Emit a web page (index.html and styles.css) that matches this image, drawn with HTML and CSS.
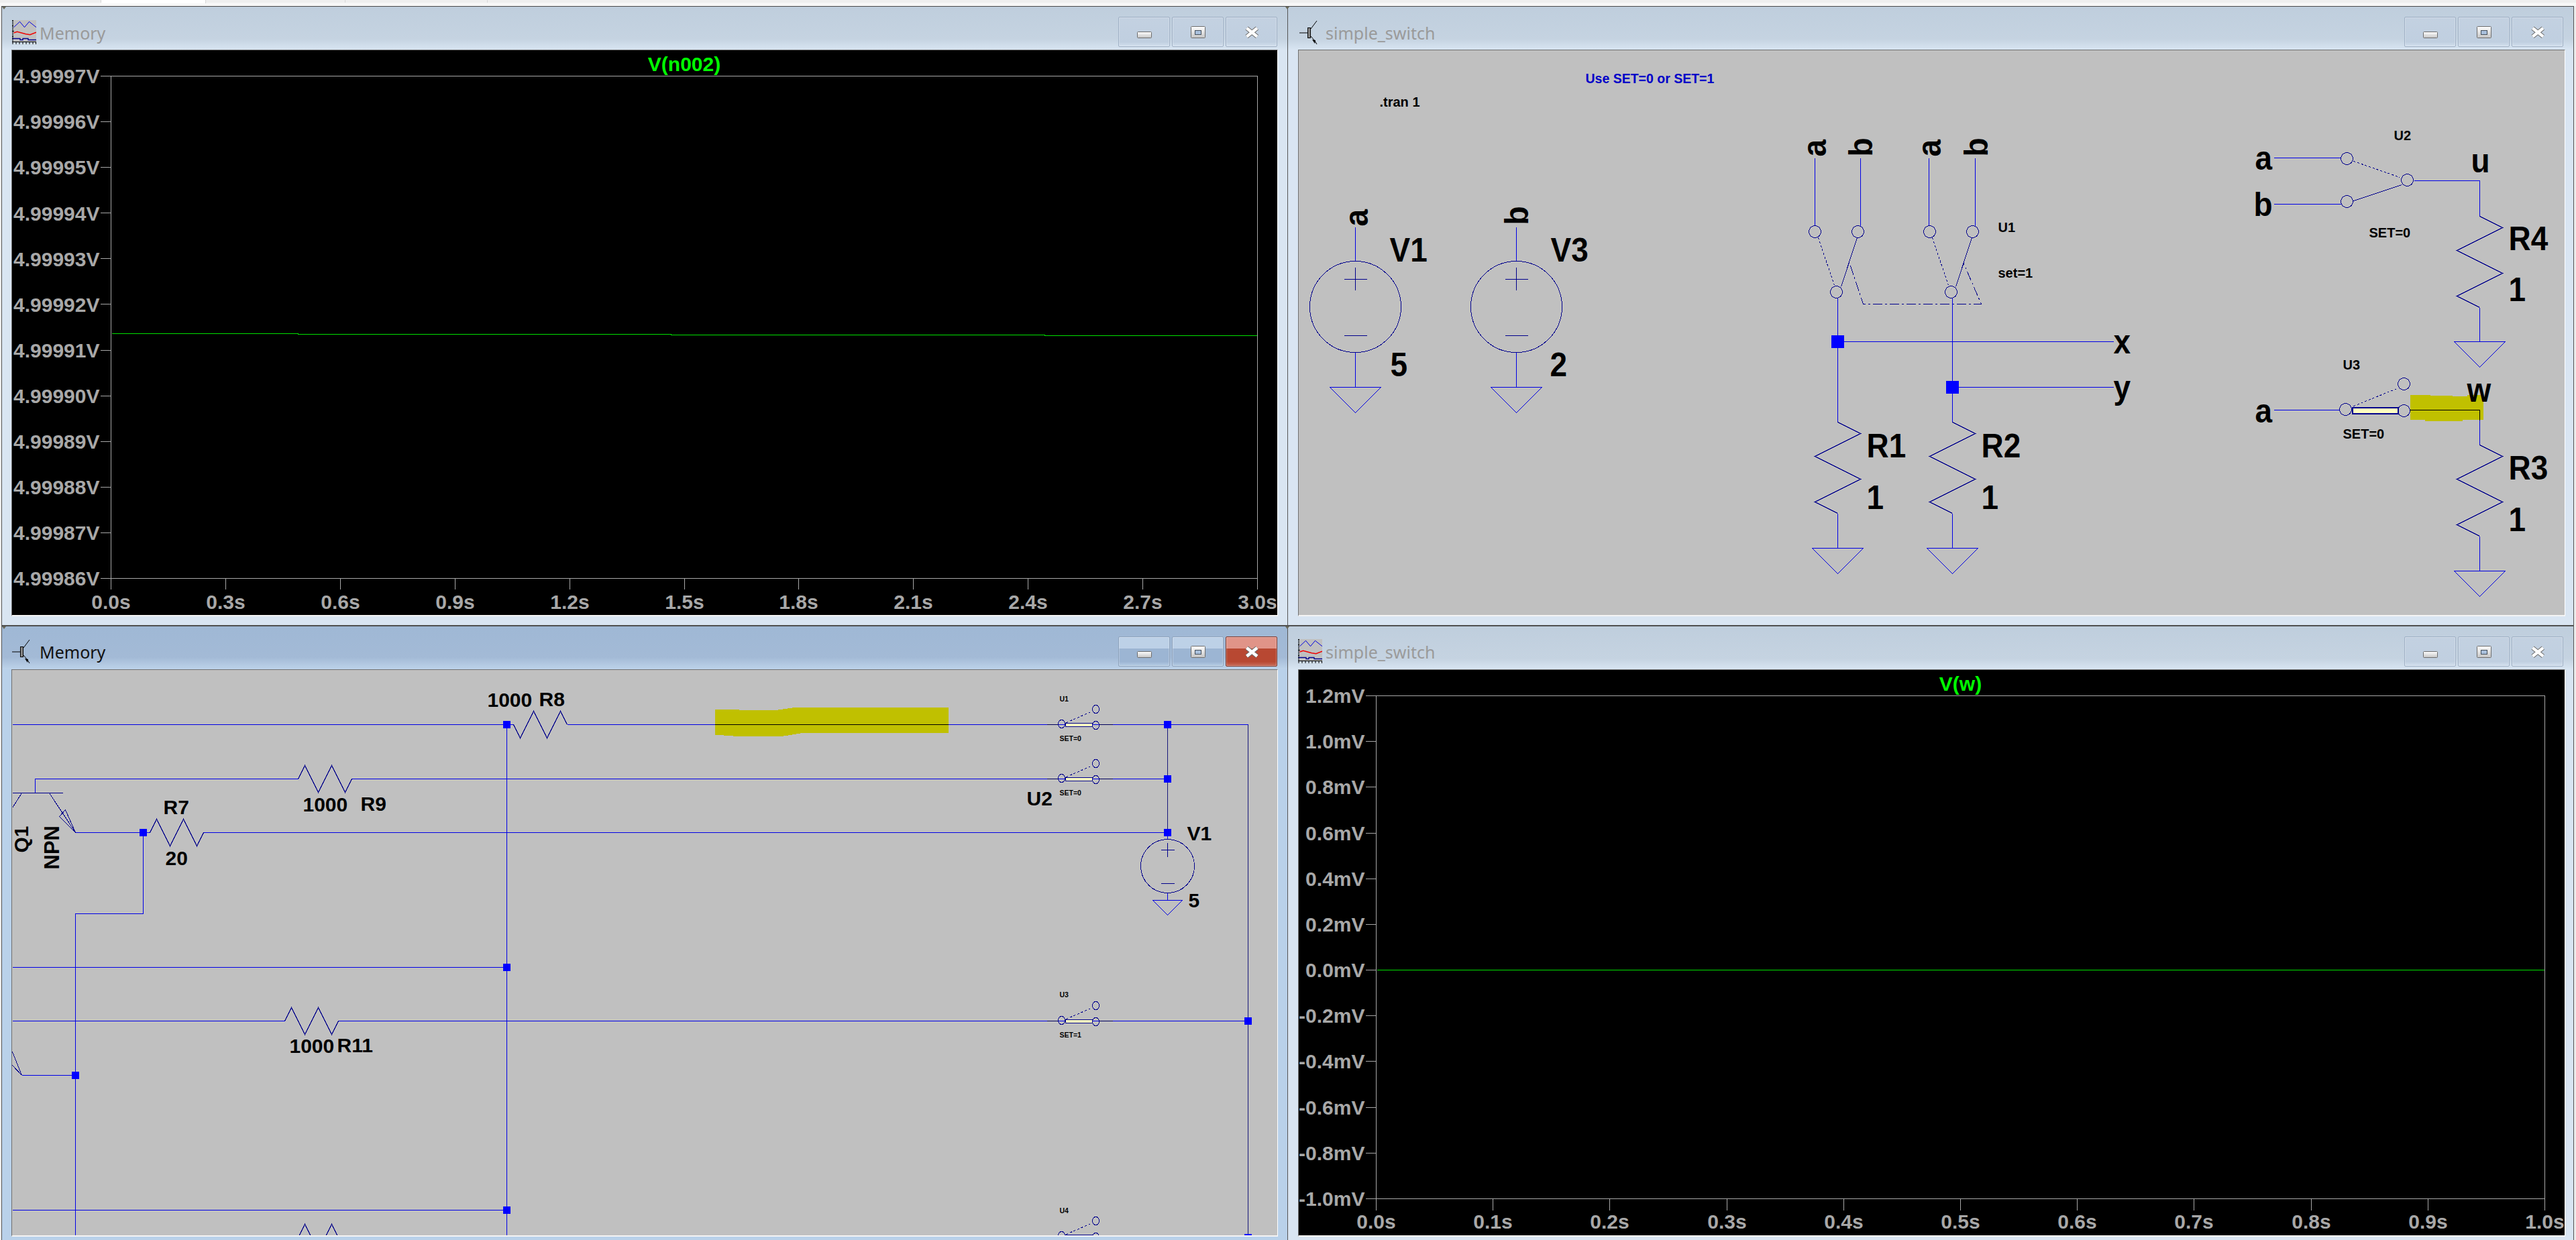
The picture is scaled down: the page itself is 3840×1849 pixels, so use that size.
FILE: index.html
```html
<!DOCTYPE html>
<html lang="en">
<head>
<meta charset="utf-8">
<title>LTspice</title>
<link rel="stylesheet" href="styles.css">
</head>
<body>
<svg class="sprite" aria-hidden="true">
  <defs>
    <g id="i-wave">
      <rect x="2" y="0" width="34" height="32" fill="#c0c0c0"/>
      <path d="M2.5 10.7L11.5 2.3L18.5 10.7L25.5 2.3L36 10.7" fill="none" stroke="#0000e0" stroke-width="1"/>
      <path d="M2.5 19L7.6 17.3L20.4 20.7L26.8 21.7L36 18.3" fill="none" stroke="#f00000" stroke-width="1.5"/>
      <path d="M0 27.5H12V29.5H16V27.5H24V29.5H36" fill="none" stroke="#00008c" stroke-width="1.3"/>
      <path d="M1 0V32M0 0.5H2M0 8.5H2M0 16.5H3M0 24.5H2M0 32.5H36M1 33V36M6 33V36M11 33V36M16 33V36M21 33V36M26 33V36M31 33V36M35.5 33V36" fill="none" stroke="#000" stroke-width="1"/>
    </g>
    <g id="i-bjt">
      <path d="M0 19H12M17 13L26 1M17 24L23 31L26 36" fill="none" stroke="#000" stroke-width="1"/>
      <rect x="12.5" y="11.5" width="4" height="15" fill="#888" stroke="#000"/>
      <path d="M19 29L24 30L23 35Z" fill="#000"/>
    </g>
    <g id="g-min"><rect x="0.5" y="0.5" width="21" height="9" rx="1" fill="url(#glyph)" stroke="#6d6d6d"/></g>
    <g id="g-max">
      <rect x="0.5" y="0.5" width="21" height="17" rx="1" fill="url(#glyph)" stroke="#6d6d6d"/>
      <rect x="6.5" y="6.5" width="9" height="6" fill="#a9c0dc" stroke="#45505c"/>
    </g>
    <g id="g-close">
      <path d="M3.5 3L19 15.5M19 3L3.5 15.5" fill="none" stroke="#6d6d6d" stroke-width="6.5"/>
      <path d="M3.5 3L19 15.5M19 3L3.5 15.5" fill="none" stroke="#fff" stroke-width="4.5"/>
    </g>
    <linearGradient id="glyph" x1="0" y1="0" x2="0" y2="1">
      <stop offset="0" stop-color="#fff"/>
      <stop offset="1" stop-color="#c4c4c4"/>
    </linearGradient>
    <path id="res-v" d="M0 0L34 17L-34 51L34 85L-34 119L0 136" fill="none" stroke="#00008c"/>
    <path id="res-h" d="M0 0L10 -20L30 20L50 -20L70 20L80 0" fill="none" stroke="#00008c"/>
    <path id="res-h2" d="M0 0L10 20L30 -20L50 20L70 -20L80 0" fill="none" stroke="#00008c"/>
    <path id="gnd" d="M-38 0H38L0 38Z" fill="none" stroke="#0000e0"/>
    <path id="gnd-s" d="M-22 0H22L0 22Z" fill="none" stroke="#0000e0"/>
    <rect id="dot" x="-9.5" y="-9.5" width="19" height="19" fill="#0000ff"/>
    <rect id="dot-s" x="-5.5" y="-5.5" width="11" height="11" fill="#0000ff"/>
    <g id="sw">
      <path d="M-22 0H-5M56 0H76" fill="none" stroke="#00005c"/>
      <ellipse cx="0" cy="-1" rx="5" ry="6" fill="none" stroke="#00008c"/>
      <ellipse cx="51" cy="1" rx="5" ry="6" fill="none" stroke="#00008c"/>
      <ellipse cx="51" cy="-23" rx="5" ry="6" fill="none" stroke="#00008c"/>
      <rect x="6" y="-2" width="40" height="5" fill="#ffffc0" stroke="#00008c"/>
      <path d="M7 -3L46 -20" fill="none" stroke="#00008c" stroke-dasharray="3 3"/>
    </g>
  </defs>
</svg>

<div class="tabstrip">
  <div class="tab tab-a"></div>
  <div class="tab tab-b is-on"></div>
  <div class="tab tab-c"></div>
  <div class="tab tab-d"></div>
  <div class="tab tab-e"></div>
</div>

<main class="desk">

  <section class="win win-l win-top">
    <header class="bar">
      <svg class="ico" width="36" height="36" viewBox="0 0 36 36"><use href="#i-wave"/></svg>
      <span class="title">Memory</span>
      <div class="btns">
        <div class="btn"><svg class="gl-min" width="22" height="10"><use href="#g-min"/></svg></div>
        <div class="btn"><svg class="gl-max" width="22" height="18"><use href="#g-max"/></svg></div>
        <div class="btn"><svg class="gl-x" width="22" height="18"><use href="#g-close"/></svg></div>
      </div>
    </header>
    <div class="client">
      <svg class="draw plot" width="1886" height="842" viewBox="17.5 74.5 1886 842">
        <text class="ptitle" x="1019.5" y="105">V(n002)</text>
        <path class="axis" d="M149 113H1874V878M165 113V878M165 862H1874
          M149 181H165M149 249H165M149 317H165M149 385H165M149 453H165M149 522H165M149 590H165M149 658H165M149 726H165M149 794H165M149 862H165
          M336 862V878M507 862V878M678 862V878M849 862V878M1020 862V878M1190 862V878M1361 862V878M1532 862V878M1703 862V878"/>
        <path class="trace" d="M166 497H444V498H1000V499H1557V500H1873"/>
        <g class="ylab">
          <text x="148" y="123">4.99997V</text>
          <text x="148" y="191">4.99996V</text>
          <text x="148" y="259">4.99995V</text>
          <text x="148" y="328">4.99994V</text>
          <text x="148" y="396">4.99993V</text>
          <text x="148" y="464">4.99992V</text>
          <text x="148" y="532">4.99991V</text>
          <text x="148" y="600">4.99990V</text>
          <text x="148" y="668">4.99989V</text>
          <text x="148" y="736">4.99988V</text>
          <text x="148" y="804">4.99987V</text>
          <text x="148" y="872">4.99986V</text>
        </g>
        <g class="xlab">
          <text x="165" y="907">0.0s</text>
          <text x="336" y="907">0.3s</text>
          <text x="507" y="907">0.6s</text>
          <text x="678" y="907">0.9s</text>
          <text x="849" y="907">1.2s</text>
          <text x="1020" y="907">1.5s</text>
          <text x="1190" y="907">1.8s</text>
          <text x="1361" y="907">2.1s</text>
          <text x="1532" y="907">2.4s</text>
          <text x="1703" y="907">2.7s</text>
          <text x="1874" y="907">3.0s</text>
        </g>
      </svg>
    </div>
  </section>

  <section class="win win-r win-top">
    <header class="bar">
      <svg class="ico" width="36" height="36" viewBox="-2 0 36 36"><use href="#i-bjt"/></svg>
      <span class="title">simple_switch</span>
      <div class="btns">
        <div class="btn"><svg class="gl-min" width="22" height="10"><use href="#g-min"/></svg></div>
        <div class="btn"><svg class="gl-max" width="22" height="18"><use href="#g-max"/></svg></div>
        <div class="btn"><svg class="gl-x" width="22" height="18"><use href="#g-close"/></svg></div>
      </div>
    </header>
    <div class="client">
      <svg class="draw sheet" width="1887" height="842" viewBox="1935.5 74.5 1887 842">
        <polygon class="hl" points="3592,588 3622,588 3622,589 3655,589 3655,590 3677,590 3677,588 3701,588 3701,625 3670,625 3670,627 3614,627 3614,625 3592,625"/>

        <text class="note" x="2363" y="123">Use SET=0 or SET=1</text>
        <text class="sm" x="2056" y="158">.tran 1</text>

        <path class="wire" d="M2020 338V389M2020 525V577M2260 338V389M2260 525V577"/>
        <circle class="part" cx="2020" cy="457" r="68"/>
        <circle class="part" cx="2260" cy="457" r="68"/>
        <path class="part" d="M2020 398V432M2003 416H2037M2003 500H2037M2260 398V432M2243 416H2277M2243 500H2277"/>
        <use href="#gnd" x="2020" y="577"/>
        <use href="#gnd" x="2260" y="577"/>
        <text class="lg-r" transform="translate(2038 337) rotate(-90) scale(.92 1)">a</text>
        <text class="lg-r" transform="translate(2277 335) rotate(-90) scale(.92 1)">b</text>
        <text class="lg" x="2071" y="390">V1</text>
        <text class="lg" x="2311" y="390">V3</text>
        <text class="lg" x="2072" y="561">5</text>
        <text class="lg" x="2310" y="561">2</text>

        <text class="lg-r" transform="translate(2721 233) rotate(-90) scale(.92 1)">a</text>
        <text class="lg-r" transform="translate(2790 233) rotate(-90) scale(.92 1)">b</text>
        <text class="lg-r" transform="translate(2892 233) rotate(-90) scale(.92 1)">a</text>
        <text class="lg-r" transform="translate(2962 233) rotate(-90) scale(.92 1)">b</text>
        <path class="wire" d="M2705 235V336M2773 235V336M2875 235V336M2944 235V336"/>
        <circle class="part" cx="2705" cy="345" r="9"/>
        <circle class="part" cx="2769" cy="345" r="9"/>
        <circle class="part" cx="2876" cy="345" r="9"/>
        <circle class="part" cx="2940" cy="345" r="9"/>
        <circle class="part" cx="2737" cy="435" r="9"/>
        <circle class="part" cx="2908" cy="435" r="9"/>
        <path class="part dash" d="M2710 354L2734 425M2880 354L2904 425"/>
        <path class="part" d="M2768 354L2744 427M2939 354L2915 427"/>
        <path class="part dashdot" d="M2758 396L2777 453H2953L2927 393"/>
        <path class="wire" d="M2739 444V629M2910 444V629M2739 509H3150M2910 577H3150"/>
        <use href="#dot" x="2739" y="509"/>
        <use href="#dot" x="2910" y="577"/>
        <text class="sm" x="2978" y="345">U1</text>
        <text class="sm" x="2978" y="413">set=1</text>
        <text class="lg" x="3150" y="527">x</text>
        <text class="lg" x="3150" y="595">y</text>

        <use href="#res-v" x="2739" y="629"/>
        <use href="#res-v" x="2910" y="629"/>
        <path class="wire" d="M2739 765V817M2910 765V817"/>
        <use href="#gnd" x="2739" y="817"/>
        <use href="#gnd" x="2910" y="817"/>
        <text class="lg" x="2782" y="682">R1</text>
        <text class="lg" x="2953" y="682">R2</text>
        <text class="lg" x="2782" y="759">1</text>
        <text class="lg" x="2953" y="759">1</text>

        <text class="lg" x="3361" y="253">a</text>
        <text class="lg" x="3359" y="322">b</text>
        <text class="sm" x="3568" y="208">U2</text>
        <text class="sm" x="3531" y="353">SET=0</text>
        <path class="wire" d="M3389 235H3489M3389 304H3489M3598 269H3696V322"/>
        <circle class="part" cx="3498" cy="236" r="9"/>
        <circle class="part" cx="3498" cy="300" r="9"/>
        <circle class="part" cx="3588" cy="268" r="9"/>
        <path class="part dash" d="M3508 240L3577 264"/>
        <path class="part" d="M3508 299L3580 275"/>
        <text class="lg" x="3683" y="257">u</text>
        <use href="#res-v" x="3696" y="322"/>
        <path class="wire" d="M3696 458V509"/>
        <use href="#gnd" x="3696" y="509"/>
        <text class="lg" x="3739" y="373">R4</text>
        <text class="lg" x="3739" y="449">1</text>

        <text class="lg" x="3361" y="630">a</text>
        <text class="sm" x="3492" y="550">U3</text>
        <text class="sm" x="3492" y="653">SET=0</text>
        <path class="wire" d="M3389 611H3487M3696 626V663"/>
        <path class="ink" d="M3592 611H3696V626"/>
        <circle class="part" cx="3496" cy="610" r="9"/>
        <circle class="part" cx="3583" cy="612" r="9"/>
        <circle class="part" cx="3583" cy="572" r="9"/>
        <rect class="sw-bar" x="3506" y="607" width="68" height="9"/>
        <path class="part dash" d="M3508 605L3575 578"/>
        <text class="lg" x="3677" y="598">w</text>
        <use href="#res-v" x="3696" y="663"/>
        <path class="wire" d="M3696 799V851"/>
        <use href="#gnd" x="3696" y="851"/>
        <text class="lg" x="3739" y="715">R3</text>
        <text class="lg" x="3739" y="792">1</text>
      </svg>
    </div>
  </section>

  <section class="win win-l win-bot is-active">
    <header class="bar">
      <svg class="ico" width="36" height="36" viewBox="0 0 36 36"><use href="#i-bjt"/></svg>
      <span class="title">Memory</span>
      <div class="btns">
        <div class="btn"><svg class="gl-min" width="22" height="10"><use href="#g-min"/></svg></div>
        <div class="btn"><svg class="gl-max" width="22" height="18"><use href="#g-max"/></svg></div>
        <div class="btn btn-close"><svg class="gl-x" width="22" height="18"><use href="#g-close"/></svg></div>
      </div>
    </header>
    <div class="client">
      <svg class="draw sheet" width="1886" height="843" viewBox="17.5 998.5 1886 843">
        <polygon class="hl" points="1065,1057 1101,1058 1153,1059 1187,1054 1413,1054 1413,1092 1199,1092 1168,1097 1092,1097 1065,1095"/>

        <path class="wire" d="M18 1080H765M845 1080H1065M1413 1080H1860"/>
        <path class="ink" d="M1065 1080H1413"/>
        <path class="wire" d="M93 1182H52V1161H444M524 1161H1740"/>
        <path class="wire" d="M112 1241H223M303 1241H1740"/>
        <path class="part" d="M18 1182H93M32 1182L18 1204M73 1182L112 1241M97 1207L88 1217L112 1241Z"/>
        <path class="wire" d="M213 1241V1362H112V1842"/>
        <path class="wire" d="M755 1080V1842"/>
        <path class="wire" d="M18 1442H755M18 1522H424M504 1522H1860M18 1804H755M18 1843H444M524 1843H1860"/>
        <path class="part" d="M18 1568L32 1603M18 1588L32 1603"/>
        <path class="wire" d="M32 1603H112"/>
        <path class="thin" d="M1740 1080V1241M1860 1080V1842"/>

        <use href="#res-h2" x="765" y="1080"/>
        <use href="#res-h" x="444" y="1161"/>
        <use href="#res-h" x="223" y="1241"/>
        <use href="#res-h" x="424" y="1522"/>
        <use href="#res-h" x="444" y="1845"/>

        <use href="#dot-s" x="755" y="1080"/>
        <use href="#dot-s" x="213" y="1241"/>
        <use href="#dot-s" x="755" y="1442"/>
        <use href="#dot-s" x="112" y="1603"/>
        <use href="#dot-s" x="755" y="1804"/>
        <use href="#dot-s" x="1740" y="1080"/>
        <use href="#dot-s" x="1740" y="1161"/>
        <use href="#dot-s" x="1740" y="1241"/>
        <use href="#dot-s" x="1860" y="1522"/>
        <use href="#dot-s" x="1860" y="1845"/>

        <use href="#sw" x="1582" y="1080"/>
        <use href="#sw" x="1582" y="1161"/>
        <use href="#sw" x="1582" y="1522"/>
        <use href="#sw" x="1582" y="1843"/>
        <text class="xs" x="1579" y="1045">U1</text>
        <text class="xs" x="1579" y="1104">SET=0</text>
        <text class="xs" x="1579" y="1185">SET=0</text>
        <text class="xs" x="1579" y="1486">U3</text>
        <text class="xs" x="1579" y="1546">SET=1</text>
        <text class="xs" x="1579" y="1808">U4</text>

        <path class="wire" d="M1740 1246V1251M1740 1331V1342"/>
        <circle class="part" cx="1740" cy="1291" r="40"/>
        <path class="part" d="M1740 1256V1277M1730 1267H1750M1730 1317H1750"/>
        <use href="#gnd-s" x="1740" y="1342"/>

        <text class="md" x="726" y="1053">1000</text>
        <text class="md" x="803" y="1052">R8</text>
        <text class="md" x="451" y="1209">1000</text>
        <text class="md" x="537" y="1208">R9</text>
        <text class="md" x="243" y="1213">R7</text>
        <text class="md" x="246" y="1289">20</text>
        <text class="md" x="431" y="1569">1000</text>
        <text class="md" x="502" y="1568">R11</text>
        <text class="md" x="1530" y="1200">U2</text>
        <text class="md" x="1769" y="1252">V1</text>
        <text class="md" x="1771" y="1352">5</text>
        <text class="md" transform="translate(41 1271) rotate(-90)">Q1</text>
        <text class="rot-npn" transform="translate(87 1296) rotate(-90)">NPN</text>
      </svg>
    </div>
  </section>

  <section class="win win-r win-bot">
    <header class="bar">
      <svg class="ico" width="36" height="36" viewBox="0 0 36 36"><use href="#i-wave"/></svg>
      <span class="title">simple_switch</span>
      <div class="btns">
        <div class="btn"><svg class="gl-min" width="22" height="10"><use href="#g-min"/></svg></div>
        <div class="btn"><svg class="gl-max" width="22" height="18"><use href="#g-max"/></svg></div>
        <div class="btn"><svg class="gl-x" width="22" height="18"><use href="#g-close"/></svg></div>
      </div>
    </header>
    <div class="client">
      <svg class="draw plot" width="1887" height="843" viewBox="1935.5 998.5 1887 843">
        <text class="ptitle" x="2922" y="1029">V(w)</text>
        <path class="axis" d="M2035 1037H3793V1804M2051 1037V1804M2051 1787H3793
          M2035 1105H2051M2035 1173H2051M2035 1242H2051M2035 1310H2051M2035 1378H2051M2035 1446H2051M2035 1514H2051M2035 1582H2051M2035 1651H2051M2035 1719H2051M2035 1787H2051
          M2225 1787V1804M2399 1787V1804M2574 1787V1804M2748 1787V1804M2922 1787V1804M3096 1787V1804M3270 1787V1804M3445 1787V1804M3619 1787V1804"/>
        <path class="trace" d="M2052 1446H3792"/>
        <g class="ylab">
          <text x="2034" y="1047">1.2mV</text>
          <text x="2034" y="1115">1.0mV</text>
          <text x="2034" y="1183">0.8mV</text>
          <text x="2034" y="1252">0.6mV</text>
          <text x="2034" y="1320">0.4mV</text>
          <text x="2034" y="1388">0.2mV</text>
          <text x="2034" y="1456">0.0mV</text>
          <text x="2034" y="1524">-0.2mV</text>
          <text x="2034" y="1592">-0.4mV</text>
          <text x="2034" y="1661">-0.6mV</text>
          <text x="2034" y="1729">-0.8mV</text>
          <text x="2034" y="1797">-1.0mV</text>
        </g>
        <g class="xlab">
          <text x="2051" y="1831">0.0s</text>
          <text x="2225" y="1831">0.1s</text>
          <text x="2399" y="1831">0.2s</text>
          <text x="2574" y="1831">0.3s</text>
          <text x="2748" y="1831">0.4s</text>
          <text x="2922" y="1831">0.5s</text>
          <text x="3096" y="1831">0.6s</text>
          <text x="3270" y="1831">0.7s</text>
          <text x="3445" y="1831">0.8s</text>
          <text x="3619" y="1831">0.9s</text>
          <text x="3793" y="1831">1.0s</text>
        </g>
      </svg>
    </div>
  </section>

</main>
</body>
</html>
```

FILE: styles.css
```css
html, body {
  margin: 0;
  padding: 0;
  height: 100%;
}

body {
  background: #ececec;
  overflow: hidden;
  font-family: "Liberation Sans", Arial, sans-serif;
}

.sprite {
  position: absolute;
  width: 0;
  height: 0;
}

.tabstrip {
  display: flex;
  height: 9px;
  background: #f7f7f7;
}

.tab {
  height: 4px;
  background: #efefef;
  border-right: 1px solid #d8d8d8;
  box-sizing: border-box;
}

.tab-a { width: 151px; }
.tab-b { width: 156px; }
.tab-c { width: 208px; }
.tab-d { width: 212px; }
.tab-e { flex: 1; border-right: 0; }

.tab.is-on {
  height: 5px;
  background: #fff;
}

.desk {
  display: grid;
  grid-template-columns: 1918px 1917px;
  grid-template-rows: 924px 916px;
  margin-left: 2px;
}

.win {
  position: relative;
  box-sizing: border-box;
  display: flex;
  flex-direction: column;
  background: #d9e5f2;
  border-top: 1px solid #4a4a4a;
}

.win::before {
  content: "";
  position: absolute;
  top: 0;
  left: 0;
  border: 3px solid transparent;
  border-top: 4px solid #6a6a5a;
}

.win-l {
  border-left: 1px solid #555;
  border-right: 1px solid #555;
}

.win-r {
  border-right: 1px solid #555;
}

.win-r::before {
  left: -4px;
}

.win-top {
  border-bottom: 1px solid #555;
}

.is-active {
  background: #b9d1ea;
}

.bar {
  display: flex;
  align-items: flex-start;
  height: 64px;
  box-sizing: border-box;
  padding: 20px 15px 0;
  background: linear-gradient(#bfcedd 0%, #c5d3e1 75%, #d8e5f2 100%);
}

.win-bot .bar {
  padding-top: 19px;
}

.is-active .bar {
  background: linear-gradient(#9fb8d5 0%, #a3bad6 72%, #bdd3ea 100%);
}

.ico {
  flex: none;
  display: block;
}

.title {
  margin-left: 5px;
  margin-top: 1px;
  font-family: "Noto Sans", "Open Sans", sans-serif;
  font-size: 25px;
  line-height: 36px;
  color: #9a9a9a;
}

.is-active .title {
  color: #111;
}

.btns {
  display: flex;
  gap: 3px;
  margin-left: auto;
  margin-top: -5px;
}

.win-bot .btns {
  margin-top: -4px;
}

.btn {
  position: relative;
  width: 77px;
  height: 45px;
  box-sizing: border-box;
  border: 1px solid #9fb0c5;
  border-radius: 2px;
  background: linear-gradient(#c3d1e1, #c0cfe0 85%, #d3e0ee);
  box-shadow: inset 0 0 0 1px rgba(255, 255, 255, .25);
}

.is-active .btn {
  background: linear-gradient(#bdd1e7 0%, #bdd1e7 40%, #9cb5d3 40%, #9cb5d3 85%, #b5cce4 100%);
  border-color: #8ea3bc;
}

.is-active .btn-close {
  background: linear-gradient(#e09488 0%, #e09488 40%, #b84832 40%, #b84832 85%, #c86a58 100%);
  border-color: #7d3a30;
}

.btn svg {
  position: absolute;
  display: block;
  left: 27px;
}

.gl-min { top: 21px; }
.gl-max { top: 13px; }
.gl-x { top: 13px; }

.client {
  box-sizing: border-box;
  margin-left: 14px;
  border-top: 1px solid #707070;
  border-left: 1px solid #707070;
  border-right: 1px solid #fff;
  border-bottom: 2px solid #f4f4f4;
  width: 1888px;
}

.win-r .client {
  margin-left: 15px;
  width: 1889px;
}

.win-top .client {
  height: 845px;
}

.win-bot .client {
  height: 846px;
}

.draw {
  display: block;
  shape-rendering: crispEdges;
}

.plot {
  background: #000;
}

.sheet {
  background: #c0c0c0;
}

.axis {
  fill: none;
  stroke: #a8a8a8;
}

.trace {
  fill: none;
  stroke: #00e000;
}

.ptitle {
  fill: #00ff00;
  font-size: 30px;
  font-weight: 700;
  text-anchor: middle;
}

.ylab text,
.xlab text {
  fill: #a8a8a8;
  font-size: 30px;
  font-weight: 700;
}

.ylab text { text-anchor: end; }
.xlab text { text-anchor: middle; }

.wire {
  fill: none;
  stroke: #0000e6;
}

.part {
  fill: none;
  stroke: #00008c;
}

.thin {
  fill: none;
  stroke: #18187a;
}

.ink {
  fill: none;
  stroke: #000;
}

.dash { stroke-dasharray: 3 3; }
.dashdot { stroke-dasharray: 14 4 3 4; }

.hl { fill: #c0c000; }

.sw-bar {
  fill: #ffffc0;
  stroke: #00008c;
  stroke-width: 2;
}

.lg, .lg-r, .md, .rot-npn, .sm, .xs, .note {
  font-weight: 700;
  fill: #000;
}

.lg {
  font-size: 50px;
  transform-box: fill-box;
  transform-origin: 0 100%;
  transform: scaleX(.92);
}

.lg-r { font-size: 50px; }
.md { font-size: 30px; }
.rot-npn { font-size: 31px; }
.sm { font-size: 20px; }
.xs { font-size: 10.5px; }

.note {
  font-size: 19.5px;
  fill: #0000c8;
}
```
